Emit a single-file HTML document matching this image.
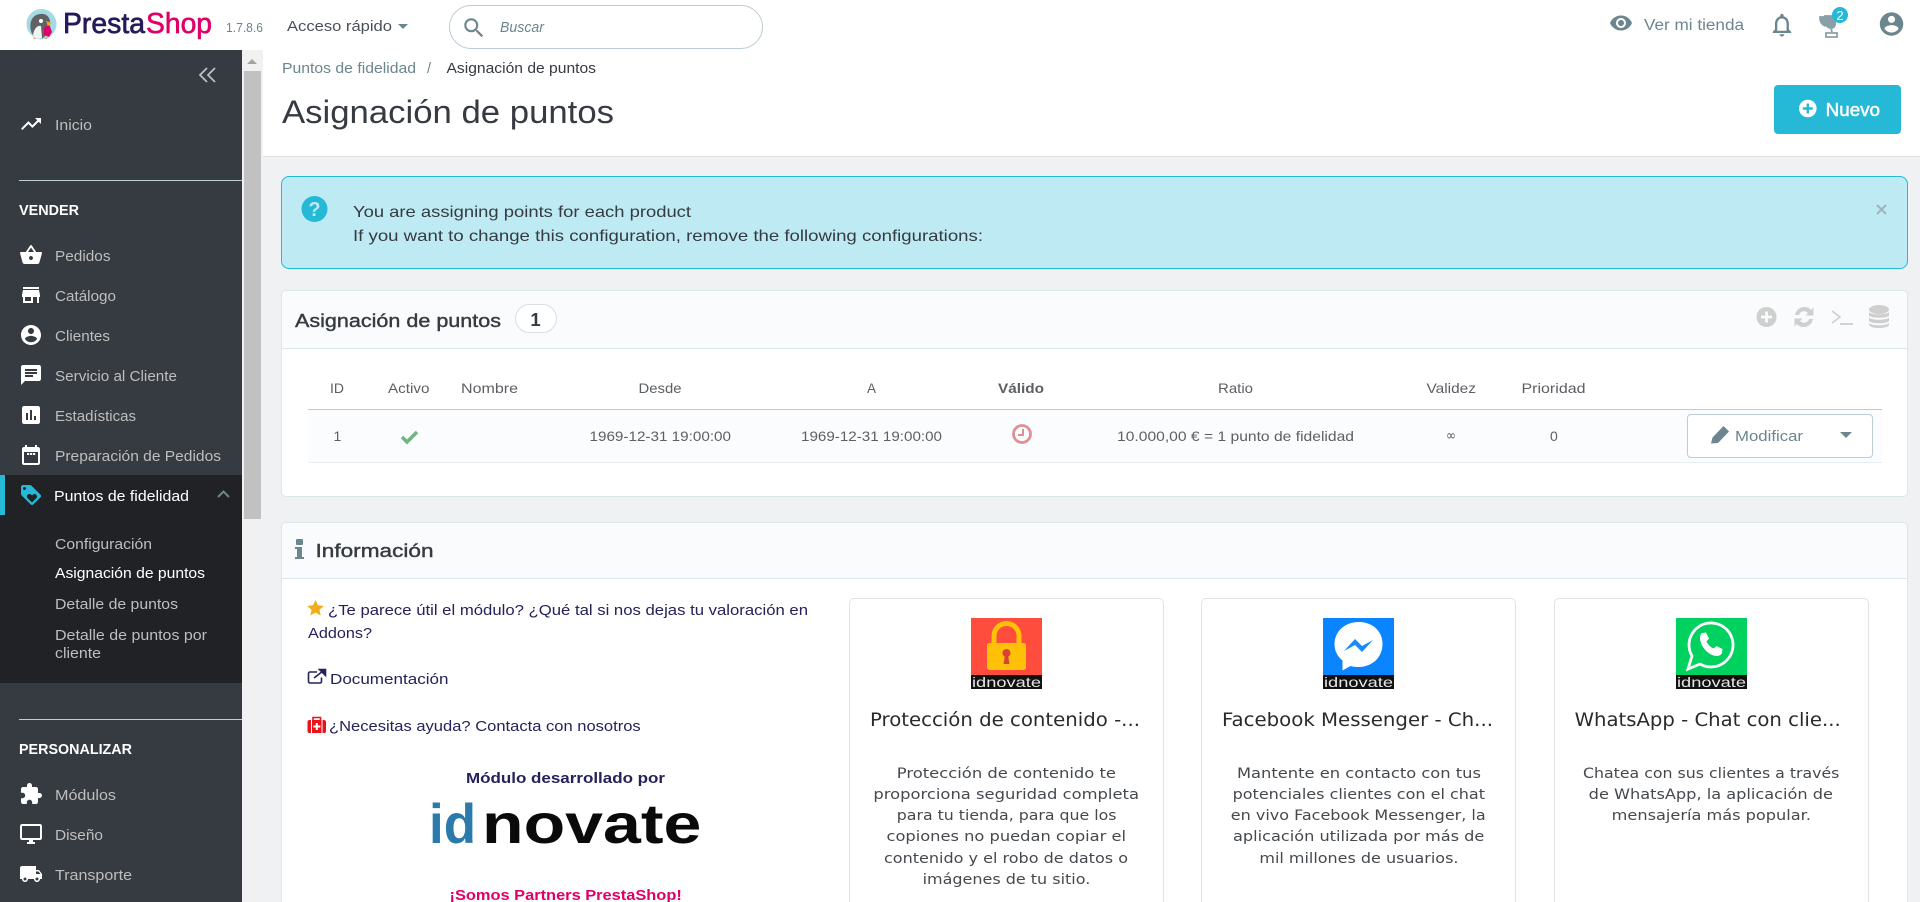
<!DOCTYPE html>
<html lang="es">
<head>
<meta charset="utf-8">
<title>Asignación de puntos • PrestaShop</title>
<style>
html,body{margin:0;padding:0;width:1920px;height:902px;overflow:hidden;background:#eff1f2;font-family:"Liberation Sans",sans-serif}
#root{position:relative;width:1920px;height:902px;overflow:hidden}
.b{position:absolute;box-sizing:border-box}
svg.o{position:absolute;left:0;top:0;display:block}
text{font-family:"Liberation Sans",sans-serif}
.nav{fill:#bebebe;font-size:14.5px}
.wh{fill:#fff}
.sec{fill:#fff;font-size:14.5px;font-weight:700}
.th{fill:#5c5f63;font-size:14px}
.td{fill:#5c5f63;font-size:14px}
.lnk{fill:#25215b;font-size:15px}
.ttl{fill:#363a41;stroke:#363a41;stroke-width:.4px;font-size:18.5px}
.mt{font-family:"DejaVu Sans",sans-serif;font-size:19px;fill:#2a2a2a}
.mp{font-family:"DejaVu Sans",sans-serif;font-size:14px;fill:#45494d}
.ln{font-size:14px;fill:#e6e6e6}
</style>
</head>
<body>
<div id="root">
<div class="b" style="left:0;top:0;width:1920px;height:50px;background:#fff"></div>
<div class="b" style="left:449px;top:5px;width:314px;height:44px;border:1px solid #bbcdd2;border-radius:22px;background:#fff"></div>
<div class="b" style="left:0;top:50px;width:242px;height:852px;background:#363a41"></div>
<div class="b" style="left:0;top:475px;width:242px;height:208px;background:#202226"></div>
<div class="b" style="left:0;top:475px;width:5px;height:40px;background:#25b9d7"></div>
<div class="b" style="left:19px;top:180px;width:223px;height:1px;background:#bbcdd2"></div>
<div class="b" style="left:19px;top:719px;width:223px;height:1px;background:#bbcdd2"></div>
<div class="b" style="left:242px;top:50px;width:21px;height:852px;background:#f1f1f1"></div>
<div class="b" style="left:244px;top:71px;width:17px;height:448px;background:#c1c1c1"></div>
<div class="b" style="left:263px;top:50px;width:1657px;height:107px;background:#fff;border-bottom:1px solid #dfe1e2"></div>
<div class="b" style="left:1774px;top:85px;width:127px;height:49px;background:#25b9d7;border-radius:4px"></div>
<div class="b" style="left:281px;top:176px;width:1627px;height:93px;background:#beeaf3;border:1px solid #25b9d7;border-radius:8px"></div>
<div class="b" style="left:281px;top:290px;width:1627px;height:207px;background:#fff;border:1px solid #dbe6e9;border-radius:5px"></div>
<div class="b" style="left:282px;top:291px;width:1625px;height:58px;background:#fafbfc;border-bottom:1px solid #dbe6e9;border-radius:5px 5px 0 0"></div>
<div class="b" style="left:308px;top:409px;width:1574px;height:54px;background:#fbfcfd;border-top:1px solid #a8d3e2;border-bottom:1px solid #e6edef"></div>
<div class="b" style="left:515px;top:304px;width:42px;height:29px;background:#fff;border:1px solid #dbdfe2;border-radius:15px"></div>
<div class="b" style="left:1687px;top:414px;width:186px;height:44px;background:#fff;border:1px solid #bbcdd2;border-radius:4px"></div>
<div class="b" style="left:281px;top:522px;width:1627px;height:380px;background:#fff;border:1px solid #dbe6e9;border-bottom:0;border-radius:5px 5px 0 0"></div>
<div class="b" style="left:282px;top:523px;width:1625px;height:56px;background:#fafbfc;border-bottom:1px solid #dbe6e9;border-radius:5px 5px 0 0"></div>
<div class="b" style="left:849px;top:598px;width:315px;height:304px;background:#fff;border:1px solid #e2e2e2;border-bottom:0;border-radius:5px 5px 0 0"></div>
<div class="b" style="left:1201px;top:598px;width:315px;height:304px;background:#fff;border:1px solid #e2e2e2;border-bottom:0;border-radius:5px 5px 0 0"></div>
<div class="b" style="left:1554px;top:598px;width:315px;height:304px;background:#fff;border:1px solid #e2e2e2;border-bottom:0;border-radius:5px 5px 0 0"></div>

<svg class="o" width="1920" height="902" viewBox="0 0 1920 902" xmlns="http://www.w3.org/2000/svg">
<!-- logo -->
<circle cx="41.500" cy="24" r="15" fill="#a4d9e6"/>
<path d="M31 31c-2-9 1-16 9-17 6-1 10 3 10 8l-3 3 1 8-5 5c-6 1-11-2-12-7z" fill="#5f6366"/>
<path d="M33 35c1-6 4-10 8-9l1 12c-4 1-7 0-9-3z" fill="#f3f3f3"/>
<circle cx="41" cy="21" r="2" fill="#fff"/>
<path d="M44 28l5-4 3 8-3 5-5-2z" fill="#df0067"/>
<path d="M46 21l6 2-4 3z" fill="#f5a623"/>
<path d="M33 37c4 3 11 3 15 0l-1 2H34z" fill="#b89a6a"/>
<text x="63" y="33" font-size="29" fill="#251b5b" stroke="#251b5b" stroke-width=".7" textLength="82" lengthAdjust="spacingAndGlyphs">Presta</text>
<text x="146" y="33" font-size="29" fill="#df0067" stroke="#df0067" stroke-width=".6" textLength="66" lengthAdjust="spacingAndGlyphs">Shop</text>
<text x="226" y="32" font-size="13" fill="#6c868e" textLength="37" lengthAdjust="spacingAndGlyphs">1.7.8.6</text>
<text x="287" y="31" font-size="15" fill="#4a5056" textLength="105" lengthAdjust="spacingAndGlyphs">Acceso rápido</text>
<path d="M398 24h10l-5 5z" fill="#6c868e"/>
<path transform="translate(461 15) scale(1.08)" fill="#6c868e" d="M15.500 14h-.79l-.28-.27C15.410 12.590 16 11.110 16 9.500 16 5.910 13.090 3 9.500 3S3 5.910 3 9.500 5.910 16 9.500 16c1.610 0 3.090-.59 4.230-1.570l.27.28v.79l5 4.990L20.490 19l-4.990-5zm-6 0C7.010 14 5 11.990 5 9.500S7.010 5 9.500 5 14 7.010 14 9.500 11.990 14 9.500 14z"/>
<text x="500" y="32" font-size="14.500" font-style="italic" fill="#6c868e" textLength="44" lengthAdjust="spacingAndGlyphs">Buscar</text>

<!-- header right -->
<path transform="translate(1609 11)" fill="#6c868e" d="M12 4.500C7 4.500 2.730 7.610 1 12c1.730 4.390 6 7.500 11 7.500s9.270-3.110 11-7.500c-1.730-4.390-6-7.500-11-7.500zM12 17c-2.760 0-5-2.240-5-5s2.240-5 5-5 5 2.240 5 5-2.240 5-5 5zm0-8c-1.660 0-3 1.340-3 3s1.340 3 3 3 3-1.340 3-3-1.340-3-3-3z"/>
<text x="1644" y="30" font-size="15.500" fill="#6c868e" textLength="100" lengthAdjust="spacingAndGlyphs">Ver mi tienda</text>
<path transform="translate(1768 11) scale(1.16)" fill="#6c868e" d="M12 22c1.100 0 2-.9 2-2h-4c0 1.100.9 2 2 2zm6-6v-5c0-3.070-1.630-5.640-4.500-6.320V4c0-.83-.67-1.500-1.500-1.500s-1.500.67-1.500 1.500v.68C7.640 5.360 6 7.920 6 11v5l-2 2v1h16v-1l-2-2zm-2 1H8v-6c0-2.480 1.510-4.500 4-4.500s4 2.020 4 4.500v6z"/>
<path d="M1825 16h11l-1 9c-.5 2-2 3-4 3s-4-1-4.500-3zM1825 17h-5c0 5 2 8 6 9M1831 28l1 4" fill="#8aa0a7" stroke="#8aa0a7" stroke-width="1.800"/>
<path d="M1826 33h11v4h-11z" fill="none" stroke="#8aa0a7" stroke-width="1.800"/>
<circle cx="1840" cy="15" r="8" fill="#25b9d7"/>
<text x="1840" y="20" font-size="13" fill="#fff" text-anchor="middle">2</text>
<path transform="translate(1877.500 10) scale(1.17)" fill="#6c868e" d="M12 2C6.480 2 2 6.480 2 12s4.480 10 10 10 10-4.480 10-10S17.520 2 12 2zm0 3c1.660 0 3 1.340 3 3s-1.340 3-3 3-3-1.340-3-3 1.340-3 3-3zm0 14.200c-2.500 0-4.710-1.280-6-3.220.03-1.990 4-3.080 6-3.080 1.990 0 5.970 1.090 6 3.080-1.290 1.940-3.500 3.220-6 3.220z"/>

<!-- scrollbar arrow -->
<path d="M252 59l5 5h-10z" fill="#a3a3a3"/>

<!-- sidebar -->
<path d="M207 68l-7 7 7 7M215 68l-7 7 7 7" fill="none" stroke="#bebebe" stroke-width="1.800"/>
<g fill="#fff">
<path transform="translate(19 112)" d="M16 6l2.290 2.290-4.880 4.880-4-4L2 16.590 3.410 18l6-6 4 4 6.300-6.290L22 12V6z"/>
<path transform="translate(19 243)" d="M17.210 9l-4.380-6.560c-.19-.28-.51-.42-.83-.42-.32 0-.64.14-.83.43L6.790 9H2c-.55 0-1 .45-1 1 0 .09.01.18.04.27l2.540 9.270c.23.84 1 1.460 1.920 1.460h13c.92 0 1.690-.62 1.930-1.460l2.540-9.270L23 10c0-.55-.45-1-1-1h-4.790zM9 9l3-4.400L15 9H9zm3 8c-1.100 0-2-.9-2-2s.9-2 2-2 2 .9 2 2-.9 2-2 2z"/>
<path transform="translate(19 283)" d="M20 4H4v2h16V4zm1 10v-2l-1-5H4l-1 5v2h1v6h10v-6h4v6h2v-6h1zm-9 4H6v-4h6v4z"/>
<path transform="translate(19 323)" d="M12 2C6.480 2 2 6.480 2 12s4.480 10 10 10 10-4.480 10-10S17.520 2 12 2zm0 3c1.660 0 3 1.340 3 3s-1.340 3-3 3-3-1.340-3-3 1.340-3 3-3zm0 14.200c-2.500 0-4.710-1.280-6-3.220.03-1.990 4-3.080 6-3.080 1.990 0 5.970 1.090 6 3.080-1.290 1.940-3.500 3.220-6 3.220z"/>
<path transform="translate(19 363)" d="M20 2H4c-1.100 0-1.990.9-1.990 2L2 22l4-4h14c1.100 0 2-.9 2-2V4c0-1.100-.9-2-2-2zM6 9h12v2H6V9zm8 5H6v-2h8v2zm4-6H6V6h12v2z"/>
<path transform="translate(19 403)" d="M19 3H5c-1.100 0-2 .9-2 2v14c0 1.100.9 2 2 2h14c1.100 0 2-.9 2-2V5c0-1.100-.9-2-2-2zM9 17H7v-7h2v7zm4 0h-2V7h2v10zm4 0h-2v-4h2v4z"/>
<path transform="translate(19 443)" d="M19 4h-1V2h-2v2H8V2H6v2H5c-1.100 0-2 .9-2 2v14c0 1.100.9 2 2 2h14c1.100 0 2-.9 2-2V6c0-1.100-.9-2-2-2zm0 16H5V9h14v11z"/>
<rect x="27" y="453" width="2.200" height="2"/><rect x="30" y="453" width="2.200" height="2"/><rect x="33" y="453" width="2.200" height="2"/>
<path transform="translate(19 782)" d="M20.500 11H19V7c0-1.100-.9-2-2-2h-4V3.500C13 2.120 11.880 1 10.500 1S8 2.120 8 3.500V5H4c-1.100 0-1.990.9-1.990 2v3.800H3.500c1.490 0 2.700 1.210 2.700 2.700s-1.210 2.700-2.700 2.700H2V20c0 1.100.9 2 2 2h3.800v-1.500c0-1.490 1.210-2.700 2.700-2.700 1.490 0 2.700 1.210 2.700 2.700V22H17c1.100 0 2-.9 2-2v-4h1.500c1.380 0 2.500-1.120 2.500-2.500S21.880 11 20.500 11z"/>
<path transform="translate(19 822)" d="M21 2H3c-1.100 0-2 .9-2 2v12c0 1.100.9 2 2 2h7v2H8v2h8v-2h-2v-2h7c1.100 0 2-.9 2-2V4c0-1.100-.9-2-2-2zm0 14H3V4h18v12z"/>
<path transform="translate(19 862)" d="M20 8h-3V4H3c-1.100 0-2 .9-2 2v11h2c0 1.660 1.340 3 3 3s3-1.340 3-3h6c0 1.660 1.340 3 3 3s3-1.340 3-3h2v-5l-3-4zM6 18.500c-.83 0-1.500-.67-1.500-1.500s.67-1.500 1.500-1.500 1.500.67 1.500 1.500-.67 1.500-1.500 1.500zm13.500-9l1.960 2.500H17V9.500h2.500zm-1.500 9c-.83 0-1.500-.67-1.500-1.500s.67-1.500 1.500-1.500 1.500.67 1.500 1.500-.67 1.500-1.500 1.500z"/>
</g>
<path transform="translate(19 483)" fill="#25b9d7" d="M21.410 11.580l-9-9C12.050 2.220 11.550 2 11 2H4c-1.100 0-2 .9-2 2v7c0 .55.22 1.050.59 1.420l9 9c.36.36.86.58 1.410.58s1.050-.22 1.410-.59l7-7c.37-.36.59-.86.59-1.410s-.23-1.060-.59-1.420zM5.500 7C4.670 7 4 6.330 4 5.500S4.670 4 5.500 4 7 4.670 7 5.500 6.330 7 5.500 7zm11.770 8.270L13 19.540l-4.270-4.270C8.280 14.810 8 14.190 8 13.500c0-1.380 1.120-2.500 2.500-2.500.69 0 1.320.28 1.770.74l.73.72.73-.73c.45-.45 1.080-.73 1.770-.73 1.380 0 2.500 1.120 2.500 2.500 0 .69-.28 1.320-.73 1.770z"/>
<path d="M218 497l5.500-5.500 5.500 5.500" fill="none" stroke="#6c868e" stroke-width="2"/>

<text class="nav" x="55" y="130" textLength="37" lengthAdjust="spacingAndGlyphs">Inicio</text>
<text class="sec" x="19" y="215" textLength="60" lengthAdjust="spacingAndGlyphs">VENDER</text>
<text class="nav" x="55" y="261" textLength="55.500" lengthAdjust="spacingAndGlyphs">Pedidos</text>
<text class="nav" x="55" y="301" textLength="61" lengthAdjust="spacingAndGlyphs">Catálogo</text>
<text class="nav" x="55" y="341" textLength="55" lengthAdjust="spacingAndGlyphs">Clientes</text>
<text class="nav" x="55" y="381" textLength="122" lengthAdjust="spacingAndGlyphs">Servicio al Cliente</text>
<text class="nav" x="55" y="421" textLength="81" lengthAdjust="spacingAndGlyphs">Estadísticas</text>
<text class="nav" x="55" y="461" textLength="166" lengthAdjust="spacingAndGlyphs">Preparación de Pedidos</text>
<text class="nav wh" x="54" y="501" textLength="135" lengthAdjust="spacingAndGlyphs">Puntos de fidelidad</text>
<text class="nav" x="55" y="549" textLength="97" lengthAdjust="spacingAndGlyphs">Configuración</text>
<text class="nav wh" x="55" y="578" textLength="150" lengthAdjust="spacingAndGlyphs">Asignación de puntos</text>
<text class="nav" x="55" y="609" textLength="123" lengthAdjust="spacingAndGlyphs">Detalle de puntos</text>
<text class="nav" x="55" y="640" textLength="152" lengthAdjust="spacingAndGlyphs">Detalle de puntos por</text>
<text class="nav" x="55" y="658" textLength="46" lengthAdjust="spacingAndGlyphs">cliente</text>
<text class="sec" x="19" y="754" textLength="113" lengthAdjust="spacingAndGlyphs">PERSONALIZAR</text>
<text class="nav" x="55" y="800" textLength="61" lengthAdjust="spacingAndGlyphs">Módulos</text>
<text class="nav" x="55" y="840" textLength="48" lengthAdjust="spacingAndGlyphs">Diseño</text>
<text class="nav" x="55" y="880" textLength="77" lengthAdjust="spacingAndGlyphs">Transporte</text>

<!-- page head -->
<text x="282" y="73" font-size="14.500" fill="#6c868e" textLength="134" lengthAdjust="spacingAndGlyphs">Puntos de fidelidad</text>
<text x="427" y="73" font-size="14.500" fill="#6c868e">/</text>
<text x="446.500" y="73" font-size="14.500" fill="#363a41" textLength="149.500" lengthAdjust="spacingAndGlyphs">Asignación de puntos</text>
<text x="282" y="123" font-size="32" fill="#363a41" textLength="332" lengthAdjust="spacingAndGlyphs">Asignación de puntos</text>
<circle cx="1807.800" cy="108.500" r="8.800" fill="#fff"/>
<path d="M1807.800 103.500v10M1802.800 108.500h10" stroke="#25b9d7" stroke-width="2.400"/>
<text x="1825.700" y="116" font-size="18" fill="#fff" stroke="#fff" stroke-width=".5" textLength="54.300" lengthAdjust="spacingAndGlyphs">Nuevo</text>

<!-- alert -->
<circle cx="314.500" cy="209" r="13" fill="#25b9d7"/>
<text x="314.500" y="216" font-size="20" font-weight="700" fill="#beeaf3" text-anchor="middle">?</text>
<text x="353" y="217" font-size="16" fill="#363a41" textLength="338" lengthAdjust="spacingAndGlyphs">You are assigning points for each product</text>
<text x="353" y="241" font-size="16" fill="#363a41" textLength="630" lengthAdjust="spacingAndGlyphs">If you want to change this configuration, remove the following configurations:</text>
<path d="M1877 205l9 9M1886 205l-9 9" stroke="#9fb5bb" stroke-width="2"/>

<!-- card 1 head -->
<text class="ttl" x="295" y="327" textLength="206" lengthAdjust="spacingAndGlyphs">Asignación de puntos</text>
<text x="535.500" y="326" font-size="18.500" font-weight="700" fill="#363a41" text-anchor="middle">1</text>
<circle cx="1766.500" cy="317" r="10" fill="#cfcfcf"/>
<path d="M1766.500 311.500v11M1761 317h11" stroke="#fafbfc" stroke-width="2.800"/>
<path d="M1795 315c1-5 5-8 9-8s5 1 7 3l2.500-2.500v8h-8l2.500-2.500c-3-3-8-2-9 2zM1813 319c-1 5-5 8-9 8s-5-1-7-3l-2.500 2.500v-8h8l-2.500 2.500c3 3 8 2 9-2z" fill="#cfcfcf"/>
<path d="M1832 311l8 6-8 6" fill="none" stroke="#cfcfcf" stroke-width="1.600"/>
<path d="M1840 324h13" stroke="#cfcfcf" stroke-width="1.800"/>
<ellipse cx="1879" cy="309.500" rx="10" ry="4.500" fill="#cfcfcf"/>
<path d="M1869 312c2 3 18 3 20 0v3.500c-2 3-18 3-20 0zM1869 317.500c2 3 18 3 20 0v3.500c-2 3-18 3-20 0zM1869 323c2 3 18 3 20 0v2c-2 4-18 4-20 0z" fill="#cfcfcf"/>

<!-- table -->
<text class="th" x="330" y="393" textLength="14" lengthAdjust="spacingAndGlyphs">ID</text>
<text class="th" x="388" y="393" textLength="41.500" lengthAdjust="spacingAndGlyphs">Activo</text>
<text class="th" x="461" y="393" textLength="57" lengthAdjust="spacingAndGlyphs">Nombre</text>
<text class="th" x="638.500" y="393" textLength="43" lengthAdjust="spacingAndGlyphs">Desde</text>
<text class="th" x="867" y="393" textLength="9" lengthAdjust="spacingAndGlyphs">A</text>
<text class="th" x="998" y="393" font-weight="700" textLength="46" lengthAdjust="spacingAndGlyphs">Válido</text>
<text class="th" x="1218" y="393" textLength="35" lengthAdjust="spacingAndGlyphs">Ratio</text>
<text class="th" x="1426.500" y="393" textLength="49.500" lengthAdjust="spacingAndGlyphs">Validez</text>
<text class="th" x="1521.500" y="393" textLength="64" lengthAdjust="spacingAndGlyphs">Prioridad</text>
<text class="td" x="333.500" y="441">1</text>
<path d="M402 437l5 5 10-10" fill="none" stroke="#70b580" stroke-width="3.500"/>
<text class="td" x="589.500" y="441" textLength="141.500" lengthAdjust="spacingAndGlyphs">1969-12-31 19:00:00</text>
<text class="td" x="801" y="441" textLength="141" lengthAdjust="spacingAndGlyphs">1969-12-31 19:00:00</text>
<circle cx="1022" cy="434" r="8.500" fill="none" stroke="#e08f95" stroke-width="2.800"/>
<path d="M1023 429v6h-5" fill="none" stroke="#e08f95" stroke-width="2"/>
<text class="td" x="1117" y="441" textLength="237" lengthAdjust="spacingAndGlyphs">10.000,00 € = 1 punto de fidelidad</text>
<text class="td" x="1446" y="440" style="font-family:'DejaVu Sans',sans-serif" textLength="10" lengthAdjust="spacingAndGlyphs">∞</text>
<text class="td" x="1550" y="441">0</text>
<path d="M1711 443.500l1.500-6 11-11.500 5.500 5.500-11 11.500z" fill="#6c868e"/>
<text x="1735" y="441" font-size="14.500" fill="#6c868e" textLength="68" lengthAdjust="spacingAndGlyphs">Modificar</text>
<path d="M1840 432h12l-6 6z" fill="#6c868e"/>

<!-- info card -->
<rect x="296" y="539" width="7" height="6" rx="1" fill="#6c868e"/>
<path d="M295 547h7v10h2v2h-9v-2h2v-8h-2z" fill="#6c868e"/>
<text class="ttl" x="315.500" y="557" textLength="118" lengthAdjust="spacingAndGlyphs">Información</text>
<path d="M315.500 600l2.500 5.300 5.700.7-4.200 3.900 1.200 5.600-5.200-2.900-5.200 2.900 1.200-5.600-4.200-3.900 5.700-.7z" fill="#f0ad1b"/>
<text class="lnk" x="328" y="615" textLength="480" lengthAdjust="spacingAndGlyphs">¿Te parece útil el módulo? ¿Qué tal si nos dejas tu valoración en</text>
<text class="lnk" x="308" y="638" textLength="64" lengthAdjust="spacingAndGlyphs">Addons?</text>
<path d="M317 672h-7a1.500 1.500 0 0 0-1.500 1.500v8a1.500 1.500 0 0 0 1.500 1.500h10a1.500 1.500 0 0 0 1.500-1.500v-4" fill="none" stroke="#25215b" stroke-width="1.600"/>
<path d="M314 678l9-7M319.500 669.500h6v6z" stroke="#25215b" stroke-width="1.600" fill="#25215b"/>
<text class="lnk" x="330" y="684" textLength="118.500" lengthAdjust="spacingAndGlyphs">Documentación</text>
<rect x="307.500" y="720" width="18.500" height="13" rx="2" fill="#e7151b"/>
<path d="M313 720v-2.500h7.500v2.500" fill="none" stroke="#e7151b" stroke-width="1.600"/>
<rect x="311" y="720" width="11.500" height="13" fill="#fff"/>
<rect x="312" y="720" width="9.500" height="13" fill="#e7151b"/>
<path d="M316.800 723v7M313.300 726.500h7" stroke="#fff" stroke-width="2"/>
<text class="lnk" x="329" y="731" textLength="311.700" lengthAdjust="spacingAndGlyphs">¿Necesitas ayuda? Contacta con nosotros</text>
<text x="466" y="783" font-size="15" font-weight="700" fill="#25215b" textLength="199" lengthAdjust="spacingAndGlyphs">Módulo desarrollado por</text>
<text x="429" y="843" font-size="56" font-weight="700" fill="#2a7bab" textLength="47" lengthAdjust="spacingAndGlyphs">id</text>
<text x="482" y="843" font-size="56" font-weight="700" fill="#0a0a0a" textLength="219.400" lengthAdjust="spacingAndGlyphs">novate</text>
<text x="449.500" y="900" font-size="15" font-weight="700" fill="#df0067" textLength="232.300" lengthAdjust="spacingAndGlyphs">¡Somos Partners PrestaShop!</text>

<!-- module icon 1 -->
<rect x="971" y="618" width="71" height="57" fill="#fe4d3d"/>
<rect x="971" y="675" width="71" height="14" fill="#111"/>
<path d="M994 644v-8a12.500 12.500 0 0 1 25 0v8" fill="none" stroke="#ffc107" stroke-width="5"/>
<rect x="987" y="643" width="39" height="27" rx="2.500" fill="#ffc107"/>
<circle cx="1006.500" cy="653" r="4" fill="#d9413a"/>
<path d="M1005 655h3l1.500 9h-6z" fill="#d9413a"/>
<text class="ln" x="972" y="687" textLength="69" lengthAdjust="spacingAndGlyphs">idnovate</text>
<!-- module icon 2 -->
<rect x="1323" y="618" width="71" height="57" fill="#0a84ff"/>
<rect x="1323" y="675" width="71" height="14" fill="#111"/>
<path d="M1358.500 622c-13.500 0-24 9.500-24 22 0 7 3 12.500 8 16.500v10l8-4.500c2.500.8 5 1 8 1 13.500 0 24-9.500 24-23s-10.500-22-24-22z" fill="#fff"/>
<path d="M1344 651l11-12 7 7 11-6-11 12-7-7z" fill="#1a88f5"/>
<text class="ln" x="1324" y="687" textLength="69" lengthAdjust="spacingAndGlyphs">idnovate</text>
<!-- module icon 3 -->
<rect x="1676" y="618" width="71" height="57" fill="#00d15f"/>
<rect x="1676" y="675" width="71" height="14" fill="#111"/>
<path d="M1688 669l4-13a22 22 0 1 1 8 8z" fill="none" stroke="#fff" stroke-width="2.800"/>
<path d="M1702 633l4-.5 3 6-2.500 3c1.500 3 4 5.500 7 7l3-2.500 6 3-.5 4c-1 2-3 3-6 3-8-1-15-9-16-17 0-3 .5-5 2-6z" fill="#fff"/>
<text class="ln" x="1677" y="687" textLength="69" lengthAdjust="spacingAndGlyphs">idnovate</text>

<!-- module text -->
<text class="mt" x="870" y="726" textLength="270" lengthAdjust="spacingAndGlyphs">Protección de contenido -...</text>
<text class="mp" x="896.800" y="778" textLength="219.200" lengthAdjust="spacingAndGlyphs">Protección de contenido te</text>
<text class="mp" x="873.400" y="799" textLength="265.600" lengthAdjust="spacingAndGlyphs">proporciona seguridad completa</text>
<text class="mp" x="896.800" y="820" textLength="219.700" lengthAdjust="spacingAndGlyphs">para tu tienda, para que los</text>
<text class="mp" x="886.500" y="841" textLength="239.500" lengthAdjust="spacingAndGlyphs">copiones no puedan copiar el</text>
<text class="mp" x="884" y="863" textLength="244" lengthAdjust="spacingAndGlyphs">contenido y el robo de datos o</text>
<text class="mp" x="922.600" y="884" textLength="167.700" lengthAdjust="spacingAndGlyphs">imágenes de tu sitio.</text>

<text class="mt" x="1222" y="726" textLength="271" lengthAdjust="spacingAndGlyphs">Facebook Messenger - Ch...</text>
<text class="mp" x="1237" y="778" textLength="244" lengthAdjust="spacingAndGlyphs">Mantente en contacto con tus</text>
<text class="mp" x="1232.600" y="799" textLength="252.400" lengthAdjust="spacingAndGlyphs">potenciales clientes con el chat</text>
<text class="mp" x="1230.800" y="820" textLength="254.900" lengthAdjust="spacingAndGlyphs">en vivo Facebook Messenger, la</text>
<text class="mp" x="1233" y="841" textLength="251.300" lengthAdjust="spacingAndGlyphs">aplicación utilizada por más de</text>
<text class="mp" x="1259.400" y="863" textLength="199.100" lengthAdjust="spacingAndGlyphs">mil millones de usuarios.</text>

<text class="mt" x="1574.600" y="726" textLength="266.100" lengthAdjust="spacingAndGlyphs">WhatsApp - Chat con clie...</text>
<text class="mp" x="1583" y="778" textLength="256.400" lengthAdjust="spacingAndGlyphs">Chatea con sus clientes a través</text>
<text class="mp" x="1588.700" y="799" textLength="244.300" lengthAdjust="spacingAndGlyphs">de WhatsApp, la aplicación de</text>
<text class="mp" x="1611.700" y="820" textLength="199.300" lengthAdjust="spacingAndGlyphs">mensajería más popular.</text>
</svg>
</div>
</body>
</html>
